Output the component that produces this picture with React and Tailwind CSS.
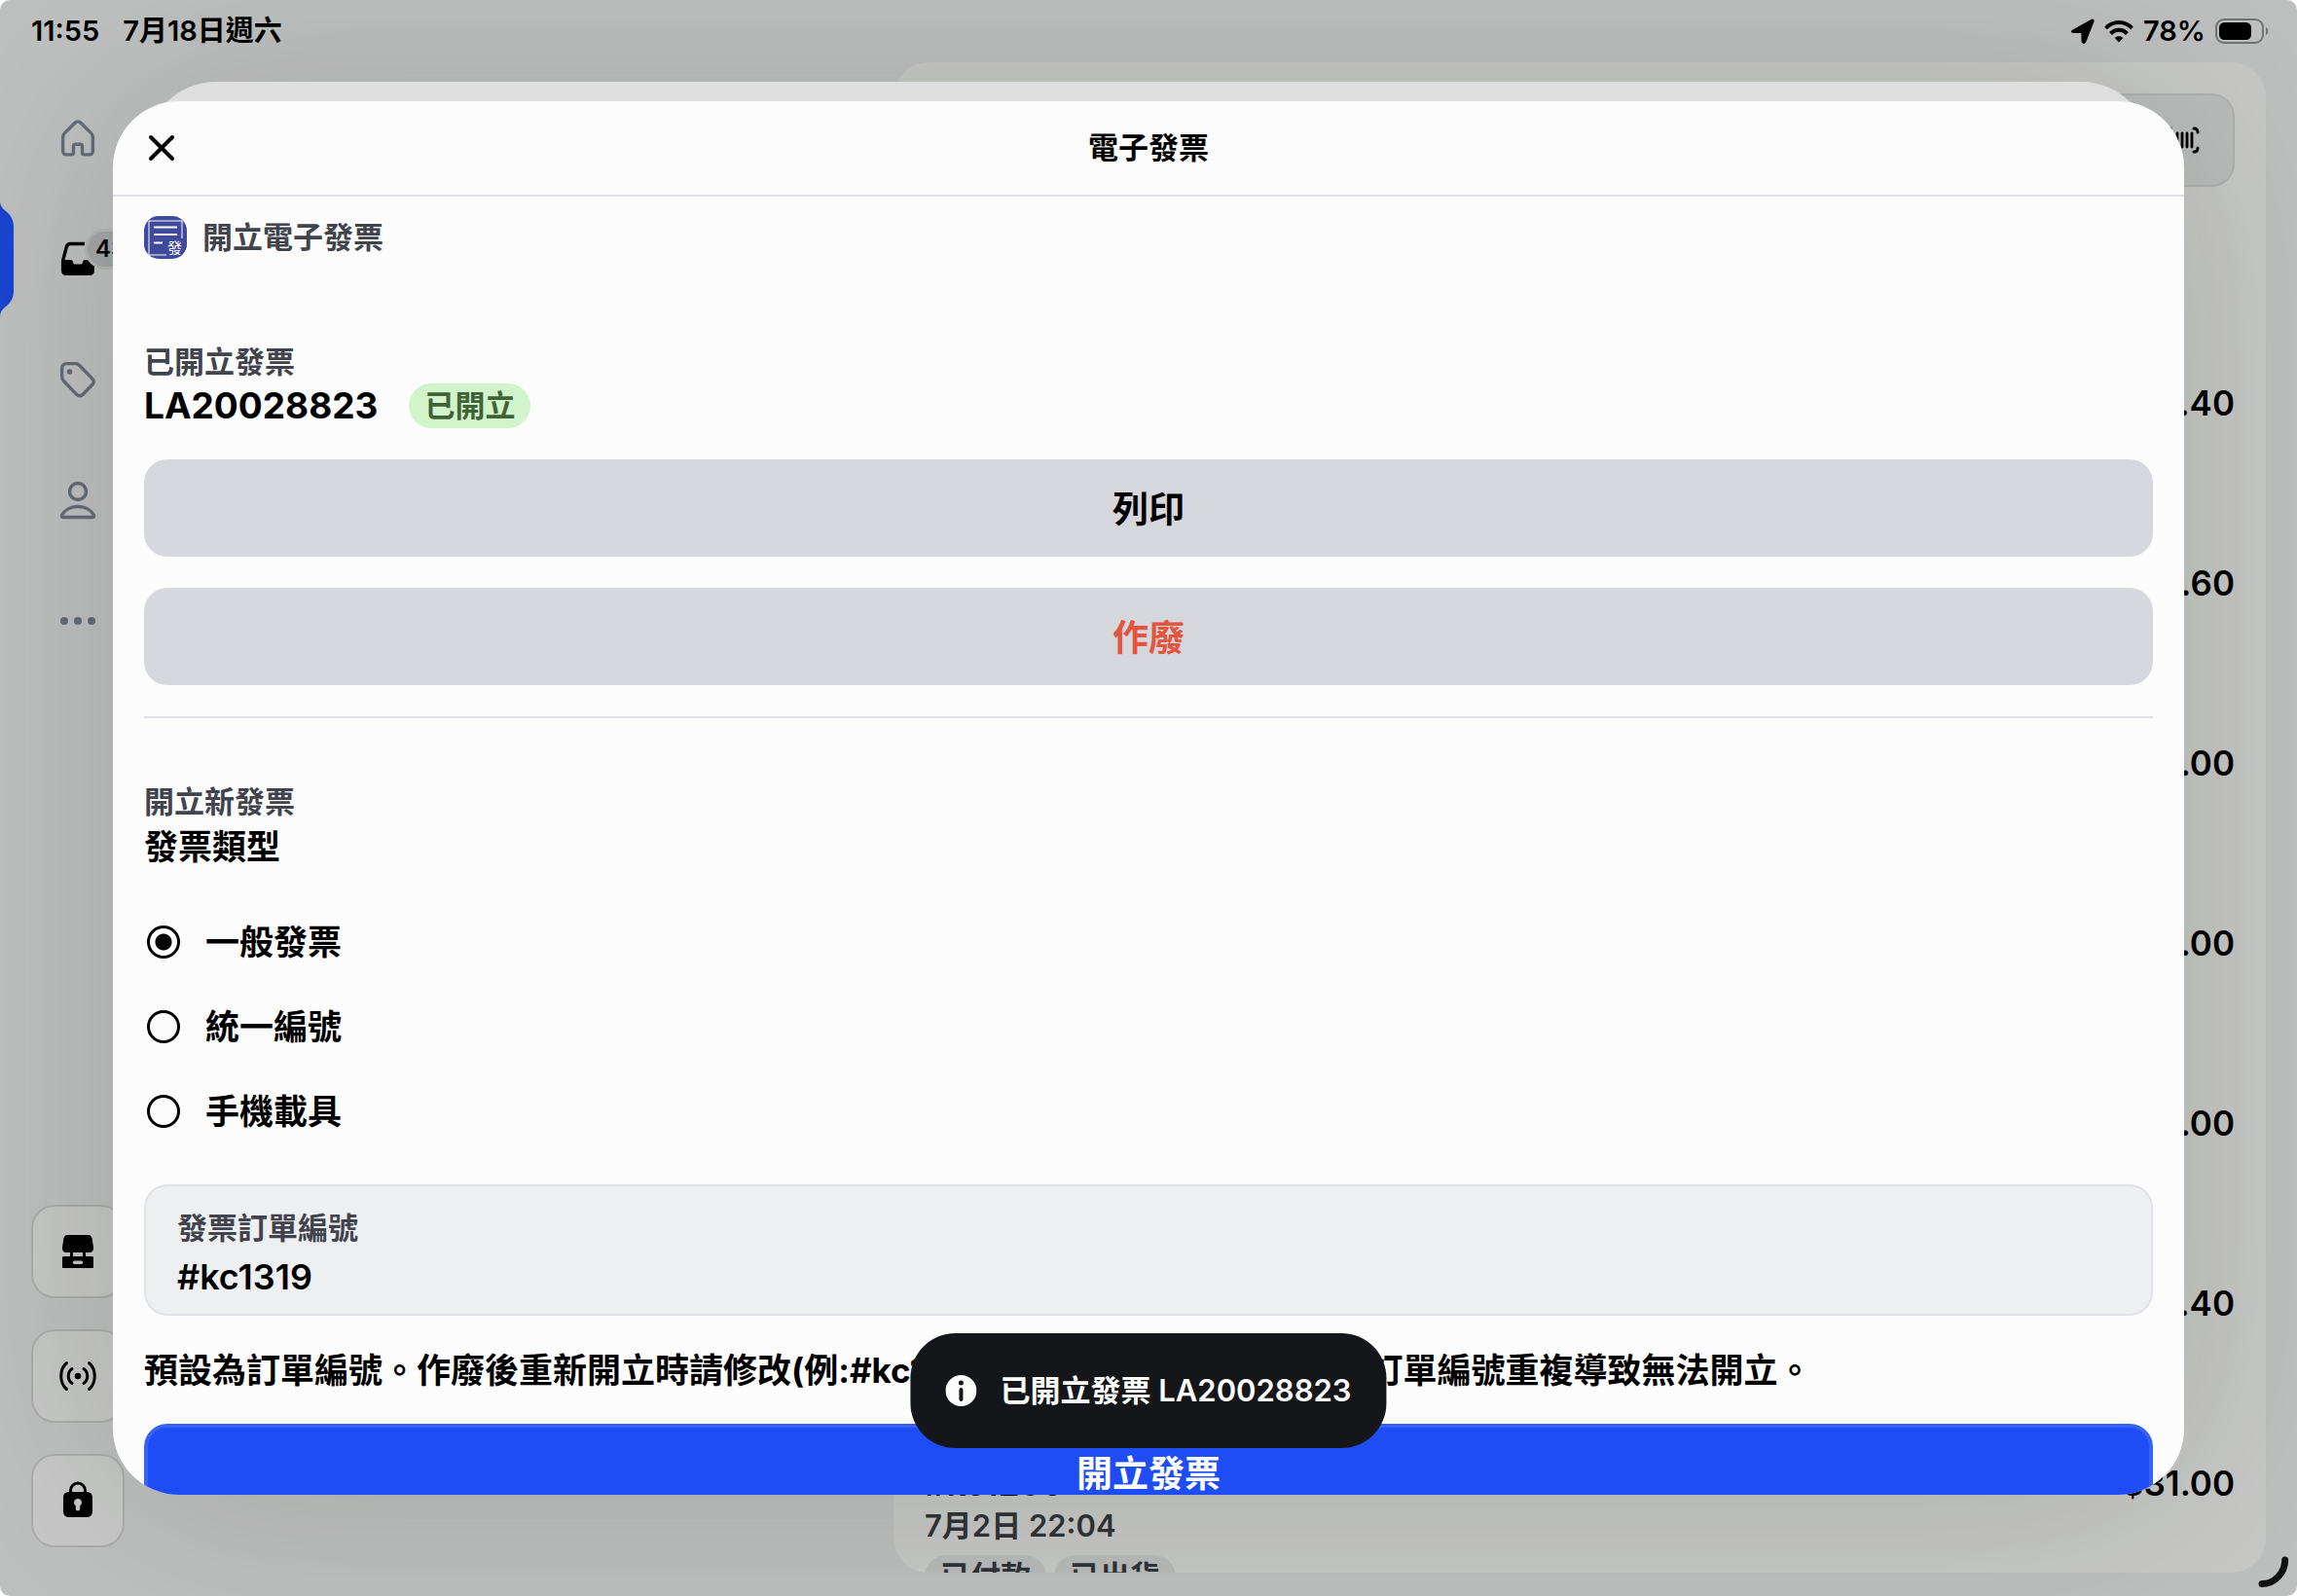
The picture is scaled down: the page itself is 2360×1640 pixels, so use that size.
import { useState } from 'react'

const PRICES = ['.40', '.60', '.00', '.00', '.00', '.40']

const INVOICE_TYPES = [
  { id: 'general', label: '一般發票' },
  { id: 'tax-id', label: '統一編號' },
  { id: 'mobile', label: '手機載具' },
]

function HomeIcon() {
  return (
    <svg width="40" height="40" viewBox="0 0 40 40" fill="none" stroke="currentColor" strokeWidth="3.400" strokeLinejoin="round">
      <path d="M4.600 19c0-1.600.6-3 1.700-4.100L17 4.200c1.700-1.700 4.300-1.700 6 0l10.700 10.700c1.100 1.100 1.700 2.500 1.700 4.100v14c0 2.200-1.500 3.900-3.700 3.900h-4.900c-1.400 0-2.300-.9-2.300-2.300v-6.300c0-1.200-.8-2-2-2h-5c-1.200 0-2 .8-2 2v6.300c0 1.400-.9 2.300-2.300 2.300H8.300c-2.200 0-3.700-1.700-3.700-3.900z" />
    </svg>
  )
}

function InboxIcon() {
  return (
    <svg width="40" height="40" viewBox="0 0 40 40" fill="none">
      <path d="M27 4.500H12.500c-2.200 0-3.700 1.200-4.200 3.300L4.600 22v9" stroke="currentColor" strokeWidth="3.400" />
      <path d="M3 21h9.500c1.200 0 2 .6 2.300 1.700l.4 1.300c.3 1 1.100 1.600 2.200 1.600h5.200c1.100 0 1.900-.6 2.200-1.600l.4-1.300c.3-1.100 1.100-1.700 2.300-1.700H37v11c0 3.200-1.900 5-5 5H8c-3.100 0-5-1.800-5-5z" fill="currentColor" />
    </svg>
  )
}

function TagIcon() {
  return (
    <svg width="40" height="40" viewBox="0 0 40 40" fill="none">
      <path d="M3.700 8.500c0-2.800 1.900-4.900 4.700-4.900h8.800c1.800 0 3.100.5 4.300 1.800L34.800 19.100c1.900 1.900 1.900 4.300 0 6.200l-9.600 10c-1.900 2-4.500 2-6.400 0L5.600 21.700c-1.300-1.300-1.900-2.700-1.900-4.500z" stroke="currentColor" strokeWidth="3.400" />
      <circle cx="11.500" cy="12" r="2.800" fill="currentColor" />
    </svg>
  )
}

function PersonIcon() {
  return (
    <svg width="40" height="40" viewBox="0 0 40 40" fill="none" stroke="currentColor" strokeWidth="3.400">
      <circle cx="20" cy="11" r="8.500" />
      <path d="M5 37.500c-1.200 0-1.900-.9-1.400-2C6 30.500 12 26.500 20 26.500s14 4 16.400 9c.5 1.100-.2 2-1.400 2z" />
    </svg>
  )
}

function MoreIcon() {
  return (
    <svg width="40" height="40" viewBox="0 0 40 40" fill="currentColor">
      <circle cx="6" cy="20" r="4" />
      <circle cx="20" cy="20" r="4" />
      <circle cx="34" cy="20" r="4" />
    </svg>
  )
}

function RegisterIcon() {
  return (
    <svg width="40" height="40" viewBox="0 0 40 40">
      <path d="M9.500 3h21c2.200 0 3.600 1.200 4 3.300l1.500 9.200c.4 3-1.200 5.500-4 5.500H8c-2.800 0-4.400-2.500-4-5.500l1.500-9.200C5.900 4.200 7.300 3 9.500 3z" />
      <path d="M12 20h3v6h-3zM25 20h3v6h-3z" />
      <path fillRule="evenodd" d="M5.500 25h29c1 0 1.500.5 1.500 1.500v9c0 1-.5 1.500-1.500 1.500h-29c-1 0-1.500-.5-1.500-1.500v-9c0-1 .5-1.500 1.500-1.500zM16.500 29.500a1.500 1.500 0 0 0 0 3.500h7a1.500 1.500 0 0 0 0-3.500z" />
    </svg>
  )
}

function SignalIcon() {
  return (
    <svg width="40" height="40" viewBox="0 0 40 40" fill="none" stroke="currentColor" strokeWidth="3" strokeLinecap="round">
      <circle cx="20" cy="20" r="3.300" fill="currentColor" stroke="none" />
      <path d="M8.500 6.500C.8 13 .8 27 8.500 33.500M31.500 6.500c7.700 6.500 7.700 20.500 0 27M14 12.500c-5 3.500-5 11.500 0 15M26 12.500c5 3.500 5 11.500 0 15" />
    </svg>
  )
}

function LockIcon() {
  return (
    <svg width="40" height="40" viewBox="0 0 40 40">
      <path d="M12.500 13v-3.500a7.500 7.500 0 0 1 15 0V13" fill="none" stroke="currentColor" strokeWidth="3" />
      <path fillRule="evenodd" d="M11 11h18c3.800 0 6 2.200 6 6v14c0 3.800-2.200 6-6 6H11c-3.800 0-6-2.200-6-6V17c0-3.800 2.200-6 6-6zM20 18a4 4 0 0 0-2.200 7.300v3a2.200 2.200 0 0 0 4.400 0v-3A4 4 0 0 0 20 18z" />
    </svg>
  )
}

function BarcodeIcon() {
  return (
    <svg width="36" height="30" viewBox="0 0 36 30" fill="none" stroke="currentColor" strokeWidth="3" strokeLinecap="round">
      <path d="M6 3C3 3 2 4 2 7M30 3c3 0 4 1 4 4M6 27c-3 0-4-1-4-4M30 27c3 0 4-1 4-4" />
      <path d="M8 8v14M13 8v14M18 8v14M23 8v14M28 8v14" strokeWidth="2.800" />
    </svg>
  )
}

function InvoiceLogo() {
  return (
    <svg className="h-11 w-11" viewBox="0 0 44 44" fill="none">
      <rect width="44" height="44" rx="15" fill="#3f4a9c" />
      <path d="M5 40V5h34M39 5v18M5 40h18" stroke="#fff" strokeWidth="1" />
      <path d="M10 11.500h24M10 19h24M10 27.500h9" stroke="#fff" strokeWidth="2" />
      <text x="24" y="38" fontSize="15" fill="#fff" fontFamily="'Noto Sans CJK TC', sans-serif">發</text>
    </svg>
  )
}

function StatusBar() {
  return (
    <div className="flex h-16 items-center justify-between pl-8 pr-7 text-[29px] font-semibold leading-8 text-black">
      <div className="flex gap-6">
        <span>11:55</span>
        <span>7月18日週六</span>
      </div>
      <div className="flex items-center gap-[10px]">
        <svg width="24" height="26" viewBox="0 0 24 26">
          <path d="M1.200 12.300 21 1.200c1.500-.8 2.600.3 2 1.900L14.600 24.400c-.7 1.700-3.300 1.600-3.500-.6L10.800 14.500 2.200 14.400C-.3 14.300-.6 13.300 1.200 12.300z" stroke="#000" strokeWidth="1" />
        </svg>
        <svg width="30" height="24" viewBox="0 0 30 24" fill="none" stroke="currentColor" strokeWidth="4">
          <path d="M1.500 9c7.500-8 19.500-8 27 0" />
          <path d="M6.500 14.500c4.800-5 12.200-5 17 0" />
          <path d="M15 23.500 10.700 19c2.400-2.400 6.200-2.400 8.600 0z" fill="currentColor" stroke="none" />
        </svg>
        <span>78%</span>
        <svg width="56" height="26" viewBox="0 0 56 26">
          <rect x="1" y="1" width="48" height="24" rx="8" fill="none" stroke="#737573" strokeWidth="2" />
          <rect x="4" y="4" width="33" height="18" rx="5.500" />
          <path d="M52 9c3 1.200 3 6.800 0 8z" fill="#737573" />
        </svg>
      </div>
    </div>
  )
}

function Sidebar() {
  const cell = 'relative flex h-[124px] w-full items-center justify-center'
  const tool = 'flex h-24 w-24 items-center justify-center rounded-3xl border-2 border-[#adaeac] bg-[#c8c9c8] text-black'
  return (
    <aside className="flex w-40 flex-col items-center justify-between pb-[50px] pt-4">
      <nav className="w-full text-[#656c78]">
        <button className={cell} aria-label="首頁"><HomeIcon /></button>
        <button className={`${cell} text-black`} aria-label="訂單">
          {/* Active marker on the screen edge */}
          <svg className="absolute left-0 top-0" width="14" height="124" viewBox="0 0 14 124" fill="#1a44d2">
            <path d="M0 2c0 5 2 8 6 11 5 4 8 9 8 16v66c0 7-3 12-8 16-4 3-6 6-6 11z" />
          </svg>
          <InboxIcon />
          <span className="absolute left-[90px] top-[34px] h-9 rounded-full bg-[#a6a8aa] px-2 text-2xl font-semibold leading-9 ring-[3px] ring-[#b6b8b7]">43</span>
        </button>
        <button className={cell} aria-label="商品"><TagIcon /></button>
        <button className={cell} aria-label="顧客"><PersonIcon /></button>
        <button className={cell} aria-label="更多"><MoreIcon /></button>
      </nav>
      <div className="flex flex-col gap-8">
        <button className={tool} aria-label="收銀機"><RegisterIcon /></button>
        <button className={tool} aria-label="連線"><SignalIcon /></button>
        <button className={tool} aria-label="鎖定"><LockIcon /></button>
      </div>
    </aside>
  )
}

function OrderList() {
  return (
    <section className="mb-6 mr-8 flex flex-1 flex-col overflow-hidden rounded-[36px] bg-[#c9cac8] px-8 pt-8 text-black">
      <div className="flex shrink-0 justify-end">
        <button aria-label="掃描條碼" className="flex h-24 w-40 items-center justify-end rounded-3xl border-2 border-[#afb1b1] bg-[#bcbebd] pr-[34px]">
          <BarcodeIcon />
        </button>
      </div>
      <ul className="mt-[200px] flex flex-col">
        {PRICES.map((price, i) => (
          <li key={i} className="flex h-[185px] shrink-0 justify-end text-[35px] font-semibold leading-11">{price}</li>
        ))}
        <li className="shrink-0">
          <div className="flex justify-between text-[35px] font-semibold leading-11">
            <span>#kc1290</span>
            <span>$31.00</span>
          </div>
          <p className="text-[31px] font-semibold leading-11 text-[#303338]">7月2日 22:04</p>
          <div className="mt-2 flex gap-2 text-[31px] font-semibold leading-11 text-[#303338]">
            <span className="rounded-full bg-[#babcbb] px-4">已付款</span>
            <span className="rounded-full bg-[#babcbb] px-4">已出貨</span>
          </div>
        </li>
      </ul>
    </section>
  )
}

function InvoiceDialog() {
  const [type, setType] = useState('general')
  return (
    <div role="dialog" aria-label="電子發票" className="relative flex min-h-0 flex-1 flex-col overflow-hidden rounded-[68px] bg-[#fcfcfc]">
      <header className="flex h-[98px] shrink-0 items-center border-b-2 border-[#e1e2e8] px-8">
        <button aria-label="關閉" className="flex h-9 w-9 items-center justify-center">
          <svg width="28" height="28" viewBox="0 0 28 28" stroke="currentColor" strokeWidth="4" strokeLinecap="round">
            <path d="M3 3l22 22M25 3 3 25" />
          </svg>
        </button>
        <h1 className="flex-1 pr-9 text-center text-[31px] font-bold leading-11">電子發票</h1>
      </header>

      <div className="flex flex-col px-8 pt-5">
        <div className="flex items-center gap-4">
          <InvoiceLogo />
          <span className="text-[31px] font-semibold leading-11 text-[#41434d]">開立電子發票</span>
        </div>

        {/* Issued invoice */}
        <h2 className="mt-[84px] text-[31px] font-semibold leading-11 text-[#41434d]">已開立發票</h2>
        <div className="flex items-center gap-8">
          <strong className="text-[37px] font-bold leading-[46px]">LA20028823</strong>
          <span className="rounded-full bg-[#d2f4cb] px-4 text-[31px] font-semibold leading-[46px] text-[#3f6236]">已開立</span>
        </div>
        <button className="mt-8 h-[100px] rounded-3xl bg-[#d6d7dc] pt-1 text-[37px] font-bold">列印</button>
        <button className="mt-8 h-[100px] rounded-3xl bg-[#d6d7dc] pt-1 text-[37px] font-bold text-[#e3553f]">作廢</button>
        <hr className="mt-8 border-t-2 border-[#e1e2e8]" />

        {/* New invoice */}
        <h2 className="mt-16 text-[31px] font-semibold leading-11 text-[#41434d]">開立新發票</h2>
        <fieldset>
          <legend className="text-[35px] font-bold leading-12">發票類型</legend>
          <div className="mt-[30px] flex flex-col">
            {INVOICE_TYPES.map(({ id, label }) => (
              <label key={id} className="flex h-[87px] items-center gap-[26px] text-[35px] font-bold leading-12">
                <input
                  type="radio"
                  name="invoice-type"
                  checked={type === id}
                  onChange={() => setType(id)}
                  className="ml-[3px] h-[34px] w-[34px] appearance-none rounded-full border-[3px] border-black bg-[radial-gradient(circle,#000_8px,transparent_9px)] not-checked:bg-none"
                />
                {label}
              </label>
            ))}
          </div>
        </fieldset>

        <div className="mt-8 flex h-[135px] flex-col justify-center rounded-3xl border-2 border-[#e1e2e8] bg-[#eeeff1] px-8 pt-1">
          <label htmlFor="order-no" className="text-[31px] font-semibold leading-[50px] text-[#41434d]">發票訂單編號</label>
          <input id="order-no" defaultValue="#kc1319" className="w-full bg-transparent text-[36px] font-semibold leading-[50px] outline-none" />
        </div>
        <p className="mt-8 text-[35px] font-bold leading-12">
          預設為訂單編號。作廢後重新開立時請修改(例:#kc1001-1)，以避免與先前開立的訂單編號重複導致無法開立。
        </p>
        <button className="mt-[31px] h-[100px] shrink-0 rounded-3xl border-4 border-[#3562f5] bg-[#1e4df5] pt-1 text-[37px] font-bold text-white">
          開立發票
        </button>
      </div>
    </div>
  )
}

function Toast() {
  return (
    <div role="status" className="absolute bottom-[152px] left-1/2 flex h-[118px] -translate-x-1/2 items-center gap-6 whitespace-nowrap rounded-[46px] bg-[#15161a] px-9 text-[31px] font-semibold text-[#fcfcfc]">
      <svg width="32" height="32" viewBox="0 0 32 32">
        <circle cx="16" cy="16" r="16" fill="#fcfcfc" />
        <circle cx="16" cy="8" r="2.500" fill="#15161a" />
        <path d="M16 15v10" stroke="#15161a" strokeWidth="4" strokeLinecap="round" />
      </svg>
      已開立發票 LA20028823
    </div>
  )
}

export default function App() {
  return (
    <div className="bg-white">
      <div className="relative flex h-screen flex-col overflow-hidden rounded-[10px] bg-[#bfc1c1] font-[Inter,'Noto_Sans_CJK_TC',sans-serif] text-black">
        <StatusBar />
        <main className="flex min-h-0 flex-1">
          <Sidebar />
          <div className="w-[758px]" />
          <OrderList />
        </main>

        {/* Modal stack */}
        <div className="absolute inset-0 flex flex-col px-[116px] py-[104px]">
          <div className="absolute inset-x-[116px] inset-y-[104px] rounded-[68px] shadow-[0_0_220px_rgba(18,26,0,0.18)]" />
          <div className="absolute inset-x-[150px] bottom-[124px] top-[84px] rounded-[72px] bg-[#dedede]" />
          <InvoiceDialog />
        </div>
        <Toast />
        <svg className="absolute bottom-0 right-0" width="44" height="44" viewBox="0 0 44 44" fill="none" stroke="#111" strokeWidth="7" strokeLinecap="round">
          <path d="M31.700 7c0 13-10.500 24.500-23.700 24.500" />
        </svg>
      </div>
    </div>
  )
}
